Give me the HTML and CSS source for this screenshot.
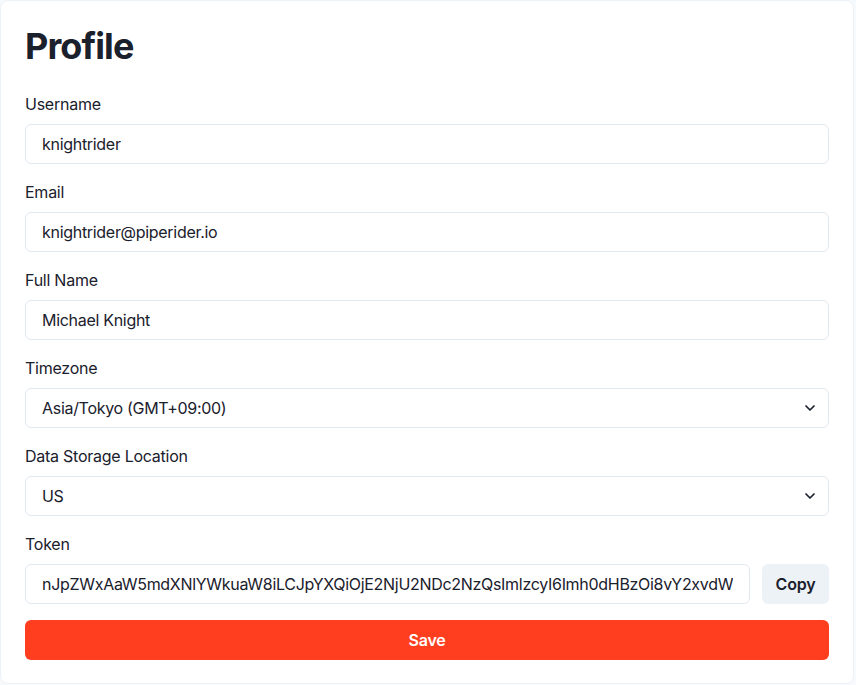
FILE: index.html
```html
<!DOCTYPE html>
<html lang="en">
<head>
<meta charset="utf-8">
<title>Profile</title>
<link rel="stylesheet" href="styles.css">
</head>
<body>
<main class="card">
  <h1 class="title">Profile</h1>
  <form class="form">
    <div class="field">
      <label class="label" for="username">Username</label>
      <input class="input" id="username" type="text" value="knightrider">
    </div>
    <div class="field">
      <label class="label" for="email">Email</label>
      <input class="input" id="email" type="text" value="knightrider@piperider.io">
    </div>
    <div class="field">
      <label class="label" for="fullname">Full Name</label>
      <input class="input" id="fullname" type="text" value="Michael Knight">
    </div>
    <div class="field">
      <label class="label" for="tz">Timezone</label>
      <div class="select-wrap">
        <select class="input select" id="tz">
          <option>Asia/Tokyo (GMT+09:00)</option>
        </select>
        <svg class="chevron" viewBox="0 0 24 24" width="16" height="16"><path d="M6 9l6 6 6-6" fill="none" stroke="currentColor" stroke-width="2.6" stroke-linecap="round" stroke-linejoin="round"/></svg>
      </div>
    </div>
    <div class="field">
      <label class="label" for="loc">Data Storage Location</label>
      <div class="select-wrap">
        <select class="input select" id="loc">
          <option>US</option>
        </select>
        <svg class="chevron" viewBox="0 0 24 24" width="16" height="16"><path d="M6 9l6 6 6-6" fill="none" stroke="currentColor" stroke-width="2.6" stroke-linecap="round" stroke-linejoin="round"/></svg>
      </div>
    </div>
    <div class="field">
      <label class="label" for="token">Token</label>
      <div class="token-row">
        <input class="input token" id="token" type="text" readonly value="nJpZWxAaW5mdXNlYWkuaW8iLCJpYXQiOjE2NjU2NDc2NzQsImlzcyI6Imh0dHBzOi8vY2xvdWQucGlwZXJpZGVyLmlvIn0">
        <button class="btn-copy" type="button">Copy</button>
      </div>
    </div>
    <button class="btn-save" type="button">Save</button>
  </form>
</main>
</body>
</html>
```
FILE: styles.css
```css
* { box-sizing: border-box; }
html, body {
  margin: 0;
  padding: 0;
  background: #f7fafc;
}
body {
  font-family: Inter, "Noto Sans", "Liberation Sans", sans-serif;
  color: #1a202c;
  width: 856px;
  height: 685px;
}
.card {
  width: 854px;
  height: 684px;
  background: #ffffff;
  border: 1px solid #edf2f7;
  border-radius: 8px;
  padding: 24px;
}
.title {
  margin: 0 0 24px;
  font-size: 36px;
  line-height: 43px;
  font-weight: 700;
  letter-spacing: -0.9px;
  color: #1a202c;
}
.form {
  display: flex;
  flex-direction: column;
  gap: 16px;
}
.field {
  display: flex;
  flex-direction: column;
  gap: 8px;
}
.label {
  font-size: 16px;
  line-height: 24px;
  font-weight: 400;
  letter-spacing: -0.25px;
  color: #1a202c;
}
.input {
  width: 100%;
  height: 40px;
  border: 1px solid #e2e8f0;
  border-radius: 6px;
  padding: 0 16px;
  font-family: inherit;
  font-size: 16px;
  letter-spacing: -0.3px;
  color: #1a202c;
  background: #ffffff;
  outline: none;
}
.select-wrap {
  position: relative;
}
.select {
  appearance: none;
  -webkit-appearance: none;
  padding-right: 40px;
}
.chevron {
  position: absolute;
  right: 11px;
  top: 12px;
  color: #1a202c;
  pointer-events: none;
}
.token-row {
  display: flex;
  gap: 12px;
}
.token {
  flex: 1;
  min-width: 0;
}
.btn-copy {
  flex: none;
  width: 67px;
  height: 40px;
  border: none;
  border-radius: 6px;
  background: #edf2f7;
  font-family: inherit;
  font-size: 16px;
  font-weight: 600;
  letter-spacing: -0.2px;
  color: #1a202c;
}
.btn-save {
  height: 40px;
  width: 100%;
  border: none;
  border-radius: 6px;
  background: #ff3e1f;
  color: #ffffff;
  font-family: inherit;
  font-size: 16px;
  font-weight: 600;
  letter-spacing: -0.2px;
}
```
